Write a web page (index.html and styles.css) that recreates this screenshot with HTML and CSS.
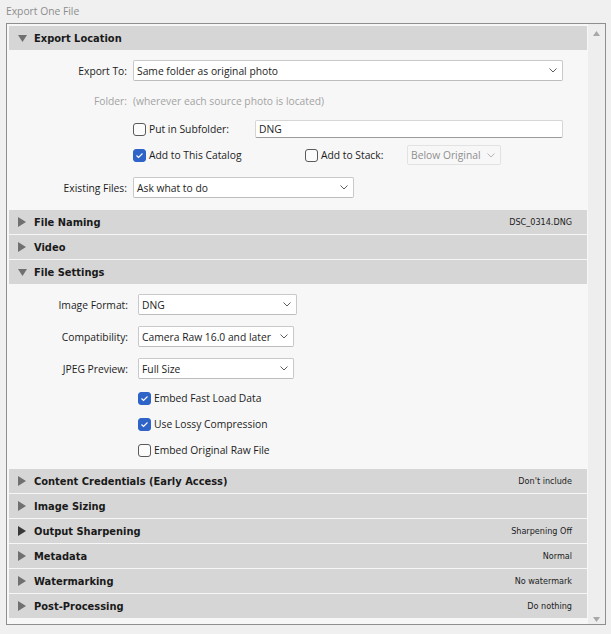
FILE: index.html
```html
<!DOCTYPE html>
<html>
<head>
<meta charset="utf-8">
<title>Export One File</title>
<link rel="stylesheet" href="styles.css">
</head>
<body>
<div class="title">Export One File</div>
<div class="box">
  <div class="panels">
    <div class="sec-head">
      <span class="tri"><svg width="9" height="7" viewBox="0 0 9 7"><polygon points="0,0 9,0 4.5,7" class="tri-fill"/></svg></span>
      <span class="sec-name">Export Location</span>
    </div>
    <div class="sec-body loc">
      <div class="row r-exportto">
        <div class="lbl">Export To:</div>
        <div class="select w-exportto"><span>Same folder as original photo</span><svg class="chev" width="8" height="5" viewBox="0 0 8 5"><polyline points="0.5,0.5 4,4 7.5,0.5"/></svg></div>
      </div>
      <div class="row r-folder">
        <div class="lbl dim">Folder:</div>
        <div class="dim">(wherever each source photo is located)</div>
      </div>
      <div class="row r-sub">
        <div class="lbl"></div>
        <div class="cb w-sub"><span class="check"></span><span>Put in Subfolder:</span></div>
        <div class="textfield">DNG</div>
      </div>
      <div class="row r-cat">
        <div class="lbl"></div>
        <div class="cb w-cat"><span class="check on"><svg width="11" height="11" viewBox="0 0 11 11"><polyline points="2.5,5.5 4.5,7.5 8.5,3.5"/></svg></span><span>Add to This Catalog</span></div>
        <div class="cb w-stack"><span class="check"></span><span>Add to Stack:</span></div>
        <div class="select disabled w-stacksel"><span>Below Original</span><svg class="chev" width="8" height="5" viewBox="0 0 8 5"><polyline points="0.5,0.5 4,4 7.5,0.5"/></svg></div>
      </div>
      <div class="row r-exist">
        <div class="lbl">Existing Files:</div>
        <div class="select w-exist"><span>Ask what to do</span><svg class="chev" width="8" height="5" viewBox="0 0 8 5"><polyline points="0.5,0.5 4,4 7.5,0.5"/></svg></div>
      </div>
    </div>

    <div class="sec-head">
      <span class="tri"><svg width="8" height="10" viewBox="0 0 8 10"><polygon points="0,0 8,5 0,10" class="tri-fill"/></svg></span>
      <span class="sec-name">File Naming</span>
      <span class="sec-val">DSC_0314.DNG</span>
    </div>
    <div class="sec-head">
      <span class="tri"><svg width="8" height="10" viewBox="0 0 8 10"><polygon points="0,0 8,5 0,10" class="tri-fill"/></svg></span>
      <span class="sec-name">Video</span>
    </div>
    <div class="sec-head">
      <span class="tri"><svg width="9" height="7" viewBox="0 0 9 7"><polygon points="0,0 9,0 4.5,7" class="tri-fill"/></svg></span>
      <span class="sec-name">File Settings</span>
    </div>
    <div class="sec-body fs">
      <div class="row r-sel">
        <div class="lbl">Image Format:</div>
        <div class="select w-fmt"><span>DNG</span><svg class="chev" width="8" height="5" viewBox="0 0 8 5"><polyline points="0.5,0.5 4,4 7.5,0.5"/></svg></div>
      </div>
      <div class="row r-sel">
        <div class="lbl">Compatibility:</div>
        <div class="select w-compat"><span>Camera Raw 16.0 and later</span><svg class="chev" width="8" height="5" viewBox="0 0 8 5"><polyline points="0.5,0.5 4,4 7.5,0.5"/></svg></div>
      </div>
      <div class="row r-sel">
        <div class="lbl">JPEG Preview:</div>
        <div class="select w-compat"><span>Full Size</span><svg class="chev" width="8" height="5" viewBox="0 0 8 5"><polyline points="0.5,0.5 4,4 7.5,0.5"/></svg></div>
      </div>
      <div class="cbrows">
        <div class="row r-cb">
          <div class="lbl"></div>
          <div class="cb"><span class="check on"><svg width="11" height="11" viewBox="0 0 11 11"><polyline points="2.5,5.5 4.5,7.5 8.5,3.5"/></svg></span><span>Embed Fast Load Data</span></div>
        </div>
        <div class="row r-cb">
          <div class="lbl"></div>
          <div class="cb"><span class="check on"><svg width="11" height="11" viewBox="0 0 11 11"><polyline points="2.5,5.5 4.5,7.5 8.5,3.5"/></svg></span><span>Use Lossy Compression</span></div>
        </div>
        <div class="row r-cb">
          <div class="lbl"></div>
          <div class="cb"><span class="check"></span><span>Embed Original Raw File</span></div>
        </div>
      </div>
    </div>

    <div class="sec-head">
      <span class="tri"><svg width="8" height="10" viewBox="0 0 8 10"><polygon points="0,0 8,5 0,10" class="tri-fill"/></svg></span>
      <span class="sec-name">Content Credentials (Early Access)</span>
      <span class="sec-val">Don't include</span>
    </div>
    <div class="sec-head">
      <span class="tri"><svg width="8" height="10" viewBox="0 0 8 10"><polygon points="0,0 8,5 0,10" class="tri-fill"/></svg></span>
      <span class="sec-name">Image Sizing</span>
    </div>
    <div class="sec-head">
      <span class="tri"><svg width="8" height="10" viewBox="0 0 8 10"><polygon points="0,0 8,5 0,10" class="tri-fill dark"/></svg></span>
      <span class="sec-name">Output Sharpening</span>
      <span class="sec-val">Sharpening Off</span>
    </div>
    <div class="sec-head">
      <span class="tri"><svg width="8" height="10" viewBox="0 0 8 10"><polygon points="0,0 8,5 0,10" class="tri-fill"/></svg></span>
      <span class="sec-name">Metadata</span>
      <span class="sec-val">Normal</span>
    </div>
    <div class="sec-head">
      <span class="tri"><svg width="8" height="10" viewBox="0 0 8 10"><polygon points="0,0 8,5 0,10" class="tri-fill"/></svg></span>
      <span class="sec-name">Watermarking</span>
      <span class="sec-val">No watermark</span>
    </div>
    <div class="sec-head">
      <span class="tri"><svg width="8" height="10" viewBox="0 0 8 10"><polygon points="0,0 8,5 0,10" class="tri-fill"/></svg></span>
      <span class="sec-name">Post-Processing</span>
      <span class="sec-val">Do nothing</span>
    </div>
  </div>
  <div class="scroll">
    <svg width="7" height="5" viewBox="0 0 7 5"><polygon points="0,5 7,5 3.5,0"/></svg>
    <svg width="7" height="5" viewBox="0 0 7 5"><polygon points="0,0 7,0 3.5,5"/></svg>
  </div>
</div>
</body>
</html>
```

FILE: styles.css
```css
* { box-sizing: border-box; }

html, body {
  margin: 0;
  padding: 0;
  background: #f0f0f0;
}

body {
  font-family: "Open Sans", "Noto Sans", sans-serif;
  font-size: 10.3px;
  color: #1c1c1c;
}

.title {
  height: 23px;
  line-height: 23px;
  padding-left: 6px;
  color: #8d8d8d;
}

.box {
  margin-left: 6px;
  width: 600px;
  height: 602px;
  border: 1px solid #8f8f8f;
  background: #f7f7f7;
  display: flex;
}

.panels {
  width: 581px;
  padding: 2px 1px 0 2px;
  overflow: hidden;
  display: flex;
  flex-direction: column;
}

.scroll {
  width: 17px;
  background: #eeeeee;
  display: flex;
  flex-direction: column;
  justify-content: space-between;
  align-items: center;
  padding: 7px 0 2px 0;
}
.scroll polygon { fill: #a8a8a8; }

.sec-head {
  flex: none;
  height: 24px;
  margin-bottom: 1px;
  background: #d6d6d6;
  display: flex;
  align-items: center;
  padding: 0 15px 0 9px;
}

.tri {
  width: 16px;
  display: flex;
  align-items: center;
}
.tri svg { display: block; }
.tri-fill { fill: #707070; }
.tri-fill.dark { fill: #383838; }

.sec-name {
  flex: 1;
  font-family: "DejaVu Sans Condensed", "DejaVu Sans", sans-serif;
  font-stretch: condensed;
  font-weight: bold;
  font-size: 11px;
  color: #1a1a1a;
  white-space: nowrap;
}

.sec-val {
  font-family: "DejaVu Sans Condensed", "DejaVu Sans", sans-serif;
  font-stretch: condensed;
  font-size: 9px;
  color: #222;
  white-space: nowrap;
}

.sec-body { flex: none; }

.row {
  display: flex;
  align-items: center;
  white-space: nowrap;
}

.loc { padding: 9px 0 12px 0; }
.loc .lbl { width: 118px; margin-right: 6px; text-align: right; }
.r-exportto { height: 21px; }
.r-folder { height: 18px; margin-top: 11px; }
.r-sub { height: 18px; margin-top: 10px; }
.r-cat { height: 20px; margin-top: 7px; }
.r-exist { height: 21px; margin-top: 12px; }

.fs { padding: 9px 0 6px 0; }
.fs .lbl { width: 119px; margin-right: 10px; text-align: right; }
.r-sel { height: 21px; }
.r-sel + .r-sel { margin-top: 11px; }
.cbrows { margin-top: 6px; }
.r-cb { height: 26px; }

.dim { color: #a3a3a3; }

.select {
  display: flex;
  align-items: center;
  justify-content: space-between;
  height: 21px;
  background: #ffffff;
  border: 1px solid #c9c9c9;
  border-bottom-color: #bdbdbd;
  border-radius: 2px;
  padding: 0 5px 0 3px;
}
.chev polyline { fill: none; stroke: #5c5c5c; stroke-width: 1; }
.select.disabled {
  background: #f7f7f7;
  border-color: #e2e2e2;
  color: #8f8f8f;
  height: 20px;
}
.select.disabled .chev polyline { stroke: #b5b5b5; }

.w-exportto { width: 430px; }
.w-exist { width: 221px; }
.w-stacksel { width: 94px; }
.w-fmt { width: 159px; }
.w-compat { width: 156px; }

.textfield {
  width: 308px;
  height: 18px;
  background: #ffffff;
  border: 1px solid #d6d6d6;
  border-bottom-color: #9c9c9c;
  border-radius: 2px;
  padding-left: 3px;
  line-height: 16px;
}

.cb {
  display: flex;
  align-items: center;
}
.w-sub { width: 122px; }
.w-cat { width: 172px; }
.w-stack { width: 102px; }

.check {
  width: 13px;
  height: 13px;
  border: 1px solid #5a5a5a;
  border-radius: 3px;
  background: #fbfbfb;
  margin-right: 3px;
  display: flex;
  align-items: center;
  justify-content: center;
}
.check.on {
  background: #2e63c7;
  border-color: #2e63c7;
}
.check svg polyline { fill: none; stroke: #ffffff; stroke-width: 1.1; }
```
